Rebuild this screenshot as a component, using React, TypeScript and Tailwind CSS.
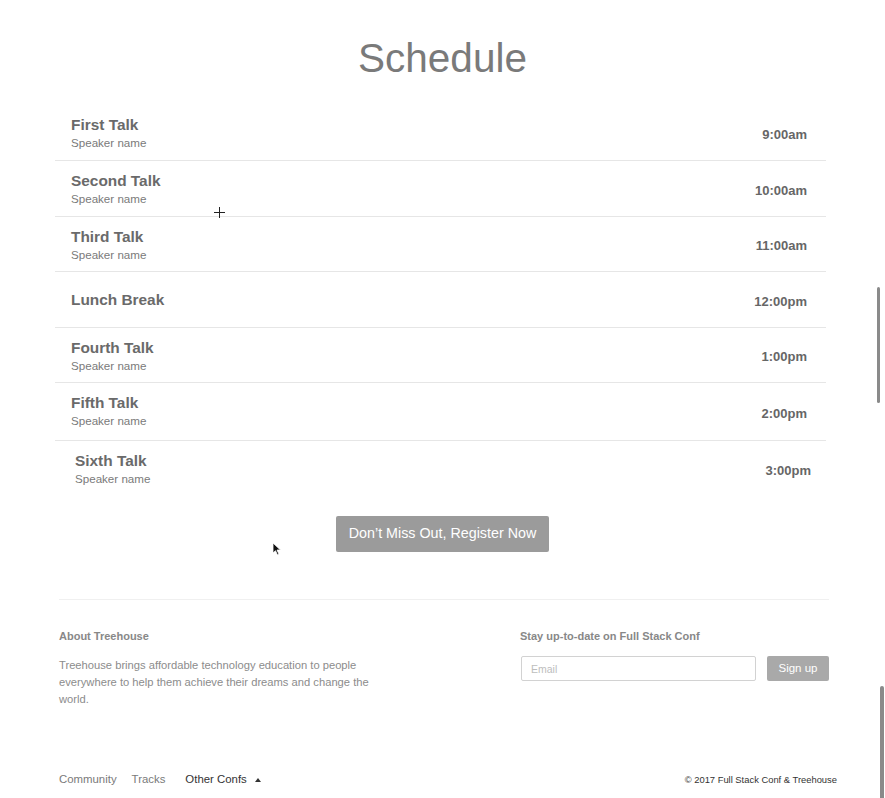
import React from "react";

const talks = [
  {title: "First Talk", speaker: "Speaker name", time: "9:00am", row: "h-[56px] pl-[16px] pr-[19px]"},
  {title: "Second Talk", speaker: "Speaker name", time: "10:00am", row: "h-[56px] pl-[16px] pr-[19px]"},
  {title: "Third Talk", speaker: "Speaker name", time: "11:00am", row: "h-[55px] pl-[16px] pr-[19px]"},
  {title: "Lunch Break", speaker: "", time: "12:00pm", row: "h-[56px] pl-[16px] pr-[19px]"},
  {title: "Fourth Talk", speaker: "Speaker name", time: "1:00pm", row: "h-[55px] pl-[16px] pr-[19px]"},
  {title: "Fifth Talk", speaker: "Speaker name", time: "2:00pm", row: "h-[58px] pl-[16px] pr-[19px]"},
  {title: "Sixth Talk", speaker: "Speaker name", time: "3:00pm", row: "h-[56px] border-b-0 pl-[20px] pr-[15px]"}
];

const Row = ({t}: {t: (typeof talks)[number]}) => (
  <li className={`flex justify-between border-b border-[#e6e6e6] ${t.row}`}>
    {t.speaker ? (
      <div className="pt-[11px]">
        <p className="text-[15.4px] leading-[18px] font-bold text-[#6a6a6a]">{t.title}</p>
        <p className="mt-[1px] text-[11.6px] leading-[16px] text-[#7a7a7a]">{t.speaker}</p>
      </div>
    ) : (
      <p className="self-center text-[15.4px] leading-[18px] font-bold text-[#6a6a6a]">{t.title}</p>
    )}
    <p className="self-center mt-[4px] text-[13px] font-bold text-[#666]">{t.time}</p>
  </li>
);

export default function App() {
  return (
    <div className="relative w-full h-[798px] overflow-hidden bg-white font-['Liberation_Sans',Arial,sans-serif]">
      <h1 className="pt-[35px] text-center text-[40.5px] leading-[46px] text-[#7a7a7a]">Schedule</h1>

      <ul className="ml-[55px] mt-[24px] w-[771px]">
        {talks.map((t) => (
          <Row key={t.title} t={t} />
        ))}
      </ul>

      <div className="mt-[19px] flex justify-center">
        <button className="h-[36px] rounded-[2px] bg-[#9b9b9b] px-[13px] text-[14.3px] text-white">
          Don’t Miss Out, Register Now
        </button>
      </div>

      <footer className="ml-[59px] mt-[47px] w-[770px] border-t border-[#f0f0f0] pt-[30px]">
        <div className="flex">
          <div className="w-[461px]">
            <h3 className="text-[11px] leading-[13px] font-bold text-[#888]">About Treehouse</h3>
            <p className="mt-[14px] w-[330px] text-[11.2px] leading-[17px] text-[#8c8c8c]">
              Treehouse brings affordable technology education to people everywhere to help them achieve their
              dreams and change the world.
            </p>
          </div>
          <div className="flex-1">
            <h3 className="text-[11px] leading-[13px] font-bold text-[#888]">Stay up-to-date on Full Stack Conf</h3>
            <form className="mt-[13px] flex gap-[11px] pl-[1px]">
              <input
                placeholder="Email"
                className="h-[25px] w-[235px] rounded-[2px] border border-[#d2d2d2] px-[9px] text-[10.5px] text-[#555] placeholder:text-[#bdbdbd] outline-none"
              />
              <button type="button" className="h-[25px] w-[62px] rounded-[2px] bg-[#a9a9a9] text-[11.5px] text-white">
                Sign up
              </button>
            </form>
          </div>
        </div>

        <div className="mt-[63px] flex w-[778px] items-center justify-between">
          <nav className="flex items-center text-[11.4px] text-[#7a7a7a]">
            <a>Community</a>
            <a className="ml-[15px]">Tracks</a>
            <a className="ml-[20px] flex items-center text-[#333]">
              Other Confs
              <svg className="ml-[8px]" width="6" height="4" viewBox="0 0 6 4">
                <path d="M0 4 L3 0 L6 4 Z" fill="#333" />
              </svg>
            </a>
          </nav>
          <p className="text-[9.4px] text-[#333]">© 2017 Full Stack Conf &amp; Treehouse</p>
        </div>
      </footer>

      {/* overlay scrollbars and cursors from the capture */}
      <div className="absolute left-[877px] top-[287px] h-[116px] w-[3px] rounded-full bg-[#8a8a8a]" />
      <div className="absolute left-[880px] top-[686px] h-[112px] w-[4px] rounded-t-full bg-[#8a8a8a]" />
      <svg className="absolute left-[213px] top-[206px]" width="13" height="13" viewBox="0 0 13 13">
        <path d="M6.5 1 V12 M1 6.5 H12" stroke="#222" strokeWidth="1" />
      </svg>
      <svg className="absolute left-[272px] top-[542px]" width="10" height="14" viewBox="0 0 10 14">
        <path d="M1 1 L1 11 L3.5 8.7 L5.5 13 L7 12.3 L5 8 L8.5 8 Z" fill="#111" stroke="#fff" strokeWidth="0.8" />
      </svg>
    </div>
  );
}
